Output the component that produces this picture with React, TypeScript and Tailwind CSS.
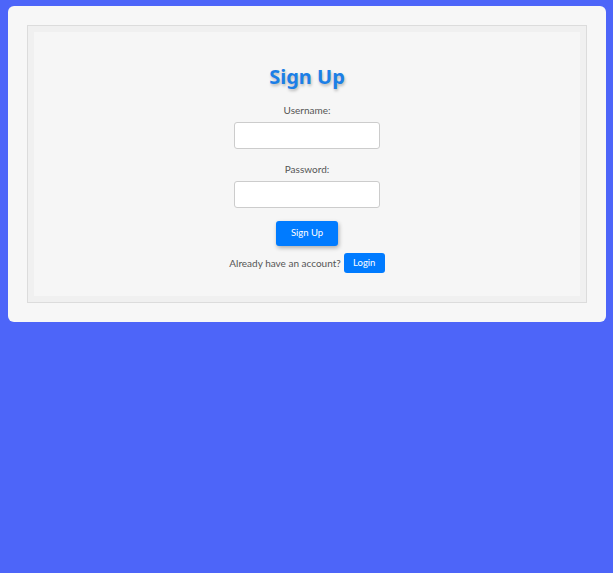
import {useState} from 'react';

export default function App() {
    const [username, setUsername] = useState('');
    const [password, setPassword] = useState('');

    return (
        <div className="min-h-screen bg-[#4d65f9] pt-[6px] pl-[8px]" style={{fontFamily: 'Lato, "Noto Sans", sans-serif'}}>
            {/* Card */}
            <div className="w-[598px] rounded-[6px] bg-[#f7f7f7] p-[19px]">
                <div className="h-[278px] border border-[#dcdcdc] bg-[#f6f6f6] shadow-[inset_0_0_0_6px_#f0f0f0]">
                    <div className="flex flex-col items-center pt-[37px]">
                        <h1
                            className="text-[20px] font-bold leading-[28px] text-[#1c7fe6] [text-shadow:1px_2px_3px_rgba(0,0,0,0.25)]"
                            style={{fontFamily: '"Noto Sans", sans-serif'}}
                        >
                            Sign Up
                        </h1>

                        <label className="mt-[12px] text-[10px] leading-[14px] text-[#555]">Username:</label>
                        <input
                            value={username}
                            onChange={(e) => setUsername(e.target.value)}
                            className="mt-[5px] h-[27px] w-[146px] rounded-[3px] border border-[#ccc] bg-white px-2 text-[11px] outline-none"
                        />

                        <label className="mt-[13px] text-[10px] leading-[14px] text-[#555]">Password:</label>
                        <input
                            type="password"
                            value={password}
                            onChange={(e) => setPassword(e.target.value)}
                            className="mt-[5px] h-[27px] w-[146px] rounded-[3px] border border-[#ccc] bg-white px-2 text-[11px] outline-none"
                        />

                        <button className="mt-[13px] h-[25px] w-[62px] rounded-[3px] bg-[#007bff] text-[9.5px] text-white shadow-[1px_2px_4px_rgba(0,0,0,0.3)]">
                            Sign Up
                        </button>

                        <div className="mt-[7px] flex items-center gap-[3px]">
                            <span className="text-[10px] text-[#555]">Already have an account?</span>
                            <button className="h-[20px] w-[41px] rounded-[3px] bg-[#007bff] text-[9.5px] text-white">
                                Login
                            </button>
                        </div>
                    </div>
                </div>
            </div>
        </div>
    );
}
